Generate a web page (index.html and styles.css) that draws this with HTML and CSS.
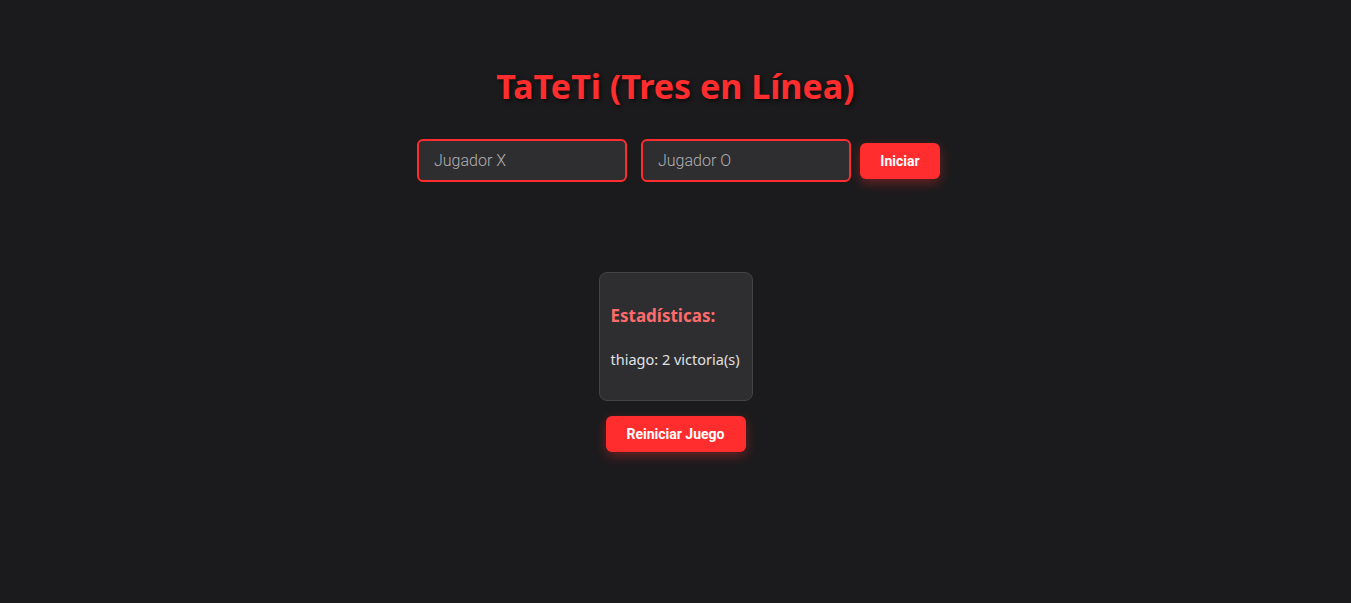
FILE: index.html
```html
<!DOCTYPE html>
<html lang="es">
<head>
<meta charset="utf-8">
<title>TaTeTi</title>
<link rel="stylesheet" href="styles.css">
</head>
<body>
<main class="app">
  <h1 class="title">TaTeTi (Tres en Línea)</h1>
  <div class="players">
    <input class="player-input" type="text" placeholder="Jugador X">
    <input class="player-input" type="text" placeholder="Jugador O">
    <button class="btn btn-start">Iniciar</button>
  </div>
  <div class="board-space"></div>
  <section class="stats">
    <h3 class="stats-title">Estadísticas:</h3>
    <p class="stats-line">thiago: 2 victoria(s)</p>
  </section>
  <button class="btn btn-reset">Reiniciar Juego</button>
</main>
</body>
</html>
```
FILE: styles.css
```css
html, body {
  margin: 0;
  padding: 0;
  background: #1b1b1d;
  height: 100%;
}
body {
  font-family: "Noto Sans", "Open Sans", sans-serif;
  color: #e6e6e6;
}
.app {
  display: flex;
  flex-direction: column;
  align-items: center;
  padding-top: 62px;
}
.title {
  margin: 0;
  font-size: 34px;
  font-weight: 700;
  color: #ff2d2d;
  text-shadow: 2px 2px 4px rgba(0, 0, 0, 0.6);
  line-height: 48px;
}
.players {
  display: flex;
  align-items: center;
  margin-top: 29px;
  padding-left: 6px;
}
.player-input {
  box-sizing: border-box;
  width: 210px;
  height: 43px;
  margin-right: 14px;
  padding: 0 15px;
  background: #2e2e31;
  border: 2px solid #ff2d2d;
  border-radius: 6px;
  color: #ddd;
  font-family: Roboto, "Liberation Sans", sans-serif;
  font-weight: 300;
  font-size: 16px;
  outline: none;
}
.player-input::placeholder {
  color: #b0b0b0;
}
.player-input + .player-input {
  margin-right: 9px;
}
.btn {
  box-sizing: border-box;
  height: 36px;
  border: none;
  border-radius: 6px;
  background: #ff2d2d;
  color: #fff;
  font-family: Roboto, "Liberation Sans", sans-serif;
  font-weight: 700;
  font-size: 14px;
  cursor: pointer;
  box-shadow: 0 4px 12px rgba(255, 45, 45, 0.35);
}
.btn-start {
  width: 80px;
}
.board-space {
  height: 90px;
}
.stats {
  box-sizing: border-box;
  width: 154px;
  height: 129px;
  padding: 0 11px;
  background: #2e2e31;
  border: 1px solid #444447;
  border-radius: 8px;
  display: flex;
  flex-direction: column;
  justify-content: center;
}
.stats-title {
  margin: 0 0 22px;
  font-size: 17px;
  font-weight: 700;
  color: #ff6b6b;
}
.stats-line {
  margin: 0;
  font-size: 14.5px;
  color: #e0e0e0;
  white-space: nowrap;
}
.btn-reset {
  width: 140px;
  margin-top: 15px;
}
```
